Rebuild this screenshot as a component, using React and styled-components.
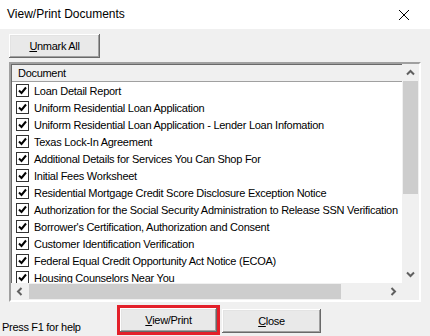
import React from "react";
import styled, { createGlobalStyle } from "styled-components";

const documents = [
  "Loan Detail Report",
  "Uniform Residential Loan Application",
  "Uniform Residential Loan Application - Lender Loan Infomation",
  "Texas Lock-In Agreement",
  "Additional Details for Services You Can Shop For",
  "Initial Fees Worksheet",
  "Residential Mortgage Credit Score Disclosure Exception Notice",
  "Authorization for the Social Security Administration to Release SSN Verification",
  "Borrower's Certification, Authorization and Consent",
  "Customer Identification Verification",
  "Federal Equal Credit Opportunity Act Notice (ECOA)",
  "Housing Counselors Near You",
];

const Chevron = ({ dir }) => {
  const rot = { up: 0, down: 180, left: 270, right: 90 }[dir];
  return (
    <svg width="9" height="9" viewBox="0 0 9 9" style={{ transform: `rotate(${rot}deg)` }}>
      <path d="M1 6.5 L4.5 3 L8 6.5" fill="none" stroke="#606060" strokeWidth="2" />
    </svg>
  );
};

const Check = () => (
  <svg width="9" height="9" viewBox="0 0 9 9">
    <path d="M1 4.5 L3.5 7 L8 1.5" fill="none" stroke="#000" strokeWidth="2" />
  </svg>
);

const App = () => {
  return (
    <Window>
      <GlobalStyle />
      <TitleBar>
        <Title>View/Print Documents</Title>
        <svg width="12" height="12" viewBox="0 0 12 12">
          <path d="M1 1 L11 11 M11 1 L1 11" stroke="#000" strokeWidth="1" />
        </svg>
      </TitleBar>
      <Body>
        <Button width={91}>
          <u>U</u>nmark All
        </Button>
        <ListBox>
          <Viewport>
            <Header>Document</Header>
            {documents.map((doc, index) => (
              <Row key={index}>
                <CheckBox>
                  <Check />
                </CheckBox>
                <span>{doc}</span>
              </Row>
            ))}
          </Viewport>
          <VScroll>
            <ArrowBox>
              <Chevron dir="up" />
            </ArrowBox>
            <Track>
              <VThumb />
            </Track>
            <ArrowBox>
              <Chevron dir="down" />
            </ArrowBox>
          </VScroll>
          <HScroll>
            <ArrowBox>
              <Chevron dir="left" />
            </ArrowBox>
            <Track>
              <HThumb />
            </Track>
            <ArrowBox>
              <Chevron dir="right" />
            </ArrowBox>
          </HScroll>
          <Corner />
        </ListBox>
        <Footer>
          <Help>Press F1 for help</Help>
          <Highlight>
            <Button width={97}>
              <u>V</u>iew/Print
            </Button>
          </Highlight>
          <Button width={99}>
            <u>C</u>lose
          </Button>
        </Footer>
      </Body>
    </Window>
  );
};

const GlobalStyle = createGlobalStyle`
  body {
    margin: 0;
    background: #f0f0f0;
    font-family: "Liberation Sans", Arial, sans-serif;
  }
`;

const Window = styled.div`
  width: 430px;
  height: 336px;
  background: #f0f0f0;
  overflow: hidden;
  font-size: 11px;
  color: #000;
`;

const TitleBar = styled.div`
  height: 29px;
  background: #fff;
  display: flex;
  align-items: center;
  justify-content: space-between;
  padding: 0 20px 0 7px;
  box-sizing: border-box;
`;

const Title = styled.div`
  font-size: 12px;
  margin-top: -2px;
`;

const Body = styled.div`
  padding: 5px 9px 0 9px;
`;

const Button = styled.button`
  width: ${(p) => p.width}px;
  height: 24px;
  box-sizing: border-box;
  background: #e9e9e9;
  border: none;
  box-shadow: inset -1px -1px #696969, inset 1px 1px #fff, inset -2px -2px #a0a0a0,
    inset 2px 2px #e3e3e3;
  font-family: inherit;
  font-size: 11px;
  font-weight: normal;
  letter-spacing: -0.3px;
  color: #000;
  padding: 0;
  display: block;
`;

const ListBox = styled.div`
  margin-top: 4px;
  width: 412px;
  height: 240px;
  box-sizing: border-box;
  border: 2px solid;
  border-color: #a0a0a0 #fff #fff #a0a0a0;
  box-shadow: inset 1px 1px #696969;
  background: #fff;
  display: grid;
  grid-template-columns: 1fr 17px;
  grid-template-rows: 1fr 17px;
`;

const Viewport = styled.div`
  overflow: hidden;
  padding-left: 1px;
  padding-top: 1px;
`;

const Header = styled.div`
  height: 16px;
  line-height: 16px;
  background: #f0f0f0;
  border-bottom: 1px solid #a0a0a0;
  padding-left: 6px;
  letter-spacing: -0.3px;
`;

const Row = styled.div`
  height: 17px;
  display: flex;
  align-items: center;
  gap: 5px;
  padding-left: 4px;
  white-space: nowrap;
  letter-spacing: -0.26px;
`;

const CheckBox = styled.span`
  width: 13px;
  height: 13px;
  flex: none;
  box-sizing: border-box;
  border: 1px solid #333;
  background: #fff;
  display: flex;
  align-items: center;
  justify-content: center;
`;

const VScroll = styled.div`
  background: #f0f0f0;
  display: flex;
  flex-direction: column;
`;

const HScroll = styled.div`
  background: #f0f0f0;
  display: flex;
`;

const ArrowBox = styled.div`
  width: 17px;
  height: 17px;
  flex: none;
  display: flex;
  align-items: center;
  justify-content: center;
`;

const Track = styled.div`
  flex: 1;
  display: flex;
`;

const VThumb = styled.div`
  width: 15px;
  height: 113px;
  margin-left: 1px;
  background: #cdcdcd;
`;

const HThumb = styled.div`
  height: 15px;
  width: 312px;
  margin-top: 1px;
  margin-left: 1px;
  background: #cdcdcd;
`;

const Corner = styled.div`
  background: #f0f0f0;
`;

const Footer = styled.div`
  display: flex;
  align-items: flex-end;
  height: 31px;
  margin-left: -9px;
`;

const Help = styled.div`
  width: 115px;
  padding-left: 2px;
  padding-bottom: 0;
  letter-spacing: -0.3px;
`;

const Highlight = styled.div`
  border: 3px solid #e3202a;
  margin-right: 2px;
  margin-bottom: -2px;
`;

export default App;
